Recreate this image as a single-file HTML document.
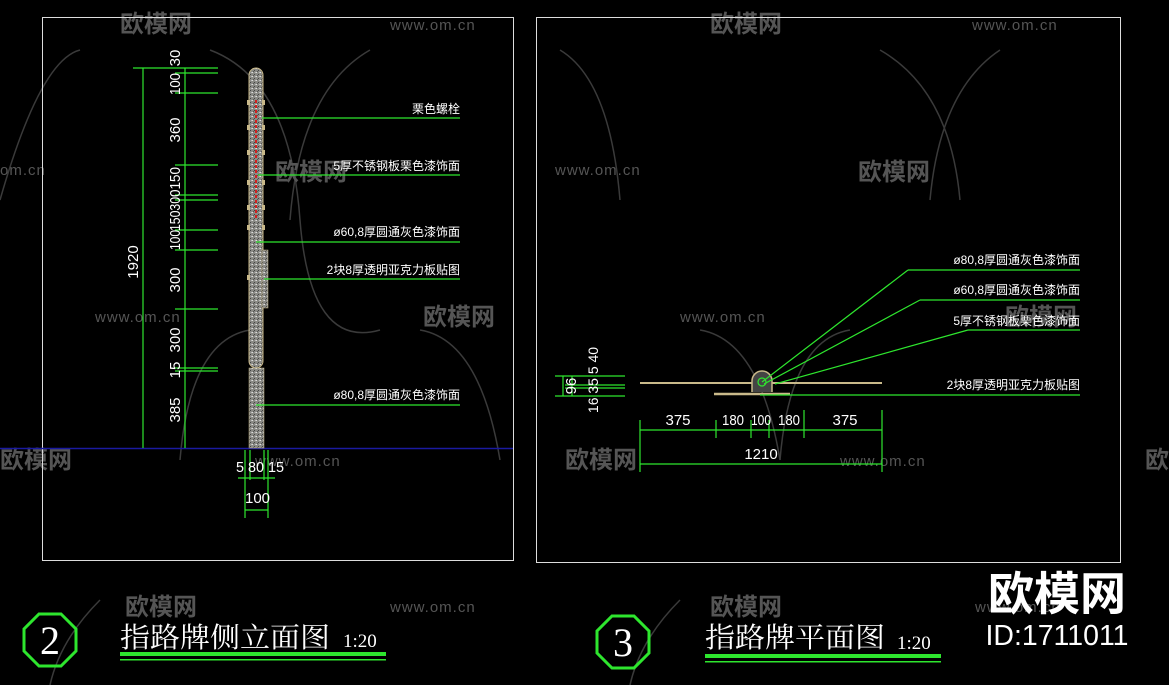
<!DOCTYPE html>
<html><head><meta charset="utf-8"><style>
html,body{margin:0;padding:0;background:#000;width:1169px;height:685px;overflow:hidden}
svg{display:block}
.t{font-family:"Liberation Sans","Noto Sans CJK SC",sans-serif;fill:#fff}
.w{font-family:"Liberation Sans","Noto Sans CJK SC",sans-serif;fill:#555}
.d{font-family:"Liberation Sans",sans-serif;fill:#fff;font-size:15px}
</style></head><body>
<svg width="1169" height="685" viewBox="0 0 1169 685" xmlns="http://www.w3.org/2000/svg">
<defs>
<pattern id="sp" width="4" height="4" patternUnits="userSpaceOnUse">
<rect width="4" height="4" fill="#8a8a85"/><rect x="0" y="0" width="1" height="1" fill="#ddd"/><rect x="2" y="2" width="1" height="1" fill="#444"/><rect x="3" y="0" width="1" height="1" fill="#bbb"/><rect x="1" y="3" width="1" height="1" fill="#555"/>
</pattern>
</defs>
<rect width="1169" height="685" fill="#000"/>
<g fill="none" stroke="#3a3a3a" stroke-width="1.5">
<path d="M0 200 Q40 60 80 50"/><path d="M210 50 Q290 80 300 220 Q310 350 380 330"/>
<path d="M370 50 Q300 90 290 220"/><path d="M420 330 Q480 340 500 460"/>
<path d="M560 50 Q610 80 620 200"/><path d="M880 50 Q950 90 960 200"/>
<path d="M1000 50 Q940 90 930 200"/><path d="M700 330 Q760 340 780 460"/>
<path d="M850 330 Q790 340 780 460"/><path d="M250 330 Q190 340 180 460"/>
<path d="M100 600 Q60 640 50 685"/><path d="M680 600 Q640 640 630 685"/>
</g>
<g class="w" font-size="24" font-weight="bold">
<text x="120" y="32">欧模网</text><text x="710" y="32">欧模网</text>
<text x="275" y="180">欧模网</text><text x="858" y="180">欧模网</text>
<text x="423" y="325">欧模网</text><text x="1005" y="325">欧模网</text>
<text x="0" y="468">欧模网</text><text x="565" y="468">欧模网</text><text x="1145" y="468">欧模网</text>
<text x="125" y="615">欧模网</text><text x="710" y="615">欧模网</text>
</g>
<g class="w" font-size="15" letter-spacing="1">
<text x="390" y="30">www.om.cn</text><text x="972" y="30">www.om.cn</text>
<text x="0" y="175">om.cn</text><text x="555" y="175">www.om.cn</text>
<text x="95" y="322">www.om.cn</text><text x="680" y="322">www.om.cn</text>
<text x="255" y="466">www.om.cn</text><text x="840" y="466">www.om.cn</text>
<text x="390" y="612">www.om.cn</text><text x="975" y="612">www.om.cn</text>
</g>
<rect x="42.5" y="17.5" width="471" height="543" fill="none" stroke="#ddd" stroke-width="1"/>
<rect x="536.5" y="17.5" width="584" height="545" fill="none" stroke="#ddd" stroke-width="1"/>
<line x1="0" y1="448.5" x2="513" y2="448.5" stroke="#1a1aa0" stroke-width="1.5"/>

<rect x="249" y="68" width="14" height="300" rx="7" fill="url(#sp)" stroke="#c9b98a" stroke-width="1"/>
<rect x="249" y="368" width="15" height="80" fill="url(#sp)" stroke="#c9b98a" stroke-width="0.5"/>
<line x1="256" y1="100" x2="256" y2="220" stroke="#d02020" stroke-width="2" stroke-dasharray="3 2"/>
<rect x="262" y="250" width="6" height="58" fill="url(#sp)" stroke="#c9b98a" stroke-width="0.5"/>
<g fill="#c9b98a">
<rect x="247" y="100" width="3" height="5"/><rect x="262" y="100" width="3" height="5"/>
<rect x="247" y="125" width="3" height="5"/><rect x="262" y="125" width="3" height="5"/>
<rect x="247" y="150" width="3" height="5"/><rect x="262" y="150" width="3" height="5"/>
<rect x="247" y="180" width="3" height="5"/><rect x="262" y="180" width="3" height="5"/>
<rect x="247" y="205" width="3" height="5"/><rect x="262" y="205" width="3" height="5"/>
<rect x="247" y="225" width="3" height="5"/><rect x="262" y="225" width="3" height="5"/>
<rect x="247" y="275" width="3" height="5"/>
</g>
<g stroke="#2ee62e" stroke-width="1.2" fill="none">
<line x1="143" y1="68" x2="143" y2="448"/>
<line x1="185" y1="68" x2="185" y2="448"/>
<line x1="133" y1="68" x2="218" y2="68"/>
<line x1="175" y1="73" x2="218" y2="73"/>
<line x1="175" y1="93" x2="218" y2="93"/>
<line x1="175" y1="165" x2="218" y2="165"/>
<line x1="175" y1="195" x2="218" y2="195"/>
<line x1="175" y1="200" x2="218" y2="200"/>
<line x1="175" y1="230" x2="218" y2="230"/>
<line x1="175" y1="250" x2="218" y2="250"/>
<line x1="175" y1="309" x2="218" y2="309"/>
<line x1="175" y1="368" x2="218" y2="368"/>
<line x1="175" y1="371" x2="218" y2="371"/>
<line x1="262" y1="118" x2="460" y2="118"/>
<line x1="258" y1="175" x2="460" y2="175"/>
<line x1="256" y1="242" x2="460" y2="242"/>
<line x1="264" y1="279" x2="460" y2="279"/>
<line x1="256" y1="405" x2="460" y2="405"/>
<line x1="245" y1="450" x2="245" y2="518"/><line x1="250" y1="450" x2="250" y2="480"/>
<line x1="264" y1="450" x2="264" y2="480"/><line x1="268" y1="450" x2="268" y2="518"/>
<line x1="238" y1="478" x2="275" y2="478"/><line x1="245" y1="510" x2="268" y2="510"/>
</g>
<g class="d">
<text transform="translate(138,262) rotate(-90)" text-anchor="middle">1920</text>
<text transform="translate(180,58) rotate(-90)" text-anchor="middle">30</text>
<text transform="translate(180,84) rotate(-90)" text-anchor="middle" textLength="22" lengthAdjust="spacingAndGlyphs">100</text>
<text transform="translate(180,130) rotate(-90)" text-anchor="middle">360</text>
<text transform="translate(180,182) rotate(-90)" text-anchor="middle" textLength="30" lengthAdjust="spacingAndGlyphs">0150</text>
<text transform="translate(180,214) rotate(-90)" text-anchor="middle" textLength="34" lengthAdjust="spacingAndGlyphs">15030</text>
<text transform="translate(180,240) rotate(-90)" text-anchor="middle" textLength="20" lengthAdjust="spacingAndGlyphs">100</text>
<text transform="translate(180,280) rotate(-90)" text-anchor="middle">300</text>
<text transform="translate(180,340) rotate(-90)" text-anchor="middle">300</text>
<text transform="translate(180,370) rotate(-90)" text-anchor="middle">15</text>
<text transform="translate(180,410) rotate(-90)" text-anchor="middle">385</text>
<text x="236" y="472" textLength="48" lengthAdjust="spacingAndGlyphs">5 80 15</text>
<text x="245" y="503">100</text>
</g>
<g class="t" font-size="12" text-anchor="end">
<text x="460" y="113">栗色螺栓</text>
<text x="460" y="170">5厚不锈钢板栗色漆饰面</text>
<text x="460" y="236">ø60,8厚圆通灰色漆饰面</text>
<text x="460" y="274">2块8厚透明亚克力板贴图</text>
<text x="460" y="399">ø80,8厚圆通灰色漆饰面</text>
</g>

<line x1="640" y1="383" x2="882" y2="383" stroke="#c9b98a" stroke-width="2"/>
<line x1="714" y1="394" x2="790" y2="394" stroke="#c9b98a" stroke-width="2.5"/>
<path d="M752 392 L752 381 A10 10 0 0 1 772 381 L772 392" fill="#444" stroke="#c9b98a" stroke-width="1.5"/>
<circle cx="762" cy="382" r="4" fill="none" stroke="#2ee62e" stroke-width="1.2"/>
<g stroke="#2ee62e" stroke-width="1.2" fill="none">
<line x1="762" y1="382" x2="908" y2="270"/><line x1="908" y1="270" x2="1080" y2="270"/>
<line x1="764" y1="384" x2="920" y2="300"/><line x1="920" y1="300" x2="1080" y2="300"/>
<line x1="775" y1="384" x2="968" y2="330"/><line x1="968" y1="330" x2="1080" y2="330"/>
<line x1="760" y1="395" x2="1080" y2="395"/>
<line x1="640" y1="430" x2="882" y2="430"/>
<line x1="640" y1="464" x2="882" y2="464"/>
<line x1="640" y1="420" x2="640" y2="472"/><line x1="882" y1="410" x2="882" y2="472"/>
<line x1="716" y1="420" x2="716" y2="438"/><line x1="751" y1="420" x2="751" y2="438"/>
<line x1="769" y1="420" x2="769" y2="438"/><line x1="804" y1="410" x2="804" y2="438"/>
<line x1="563" y1="376" x2="563" y2="396"/><line x1="572" y1="376" x2="572" y2="396"/>
<line x1="555" y1="376" x2="625" y2="376"/><line x1="565" y1="385" x2="625" y2="385"/>
<line x1="565" y1="388" x2="625" y2="388"/><line x1="555" y1="396" x2="625" y2="396"/>
</g>
<g class="d">
<text x="678" y="425" text-anchor="middle">375</text>
<text x="733" y="425" text-anchor="middle" textLength="22" lengthAdjust="spacingAndGlyphs">180</text>
<text x="761" y="425" text-anchor="middle" textLength="20" lengthAdjust="spacingAndGlyphs">100</text>
<text x="789" y="425" text-anchor="middle" textLength="22" lengthAdjust="spacingAndGlyphs">180</text>
<text x="845" y="425" text-anchor="middle">375</text>
<text x="761" y="459" text-anchor="middle">1210</text>
<text transform="translate(576,386) rotate(-90)" text-anchor="middle">96</text>
<text transform="translate(598,380) rotate(-90)" text-anchor="middle" font-size="14">16 35 5 40</text>
</g>
<g class="t" font-size="12" text-anchor="end">
<text x="1080" y="264">ø80,8厚圆通灰色漆饰面</text>
<text x="1080" y="294">ø60,8厚圆通灰色漆饰面</text>
<text x="1080" y="325">5厚不锈钢板栗色漆饰面</text>
<text x="1080" y="389">2块8厚透明亚克力板贴图</text>
</g>

<polygon points="39,614 61,614 76,629 76,651 61,666 39,666 24,651 24,629" fill="none" stroke="#2ee62e" stroke-width="3"/>
<text x="50" y="654" class="t" font-size="40" text-anchor="middle" style="font-family:'Liberation Serif',serif">2</text>
<polygon points="612,616 634,616 649,631 649,653 634,668 612,668 597,653 597,631" fill="none" stroke="#2ee62e" stroke-width="3"/>
<text x="623" y="656" class="t" font-size="40" text-anchor="middle" style="font-family:'Liberation Serif',serif">3</text>
<text x="120" y="647" class="t" font-size="28" textLength="210" lengthAdjust="spacingAndGlyphs" style="font-family:'Liberation Serif','Noto Serif CJK SC',serif">指路牌侧立面图</text>
<text x="343" y="647" class="t" font-size="19" style="font-family:'Liberation Serif',serif">1:20</text>
<rect x="120" y="652" width="266" height="4" fill="#2ee62e"/><rect x="120" y="659" width="266" height="1.5" fill="#2ee62e"/>
<text x="705" y="647" class="t" font-size="28" textLength="180" lengthAdjust="spacingAndGlyphs" style="font-family:'Liberation Serif','Noto Serif CJK SC',serif">指路牌平面图</text>
<text x="897" y="649" class="t" font-size="19" style="font-family:'Liberation Serif',serif">1:20</text>
<rect x="705" y="654" width="236" height="4" fill="#2ee62e"/><rect x="705" y="661" width="236" height="1.5" fill="#2ee62e"/>
<text x="1057" y="610" class="t" font-size="46" font-weight="bold" text-anchor="middle">欧模网</text>
<text x="1057" y="645" class="t" font-size="29" text-anchor="middle" textLength="143" lengthAdjust="spacingAndGlyphs">ID:1711011</text>
</svg>
</body></html>
